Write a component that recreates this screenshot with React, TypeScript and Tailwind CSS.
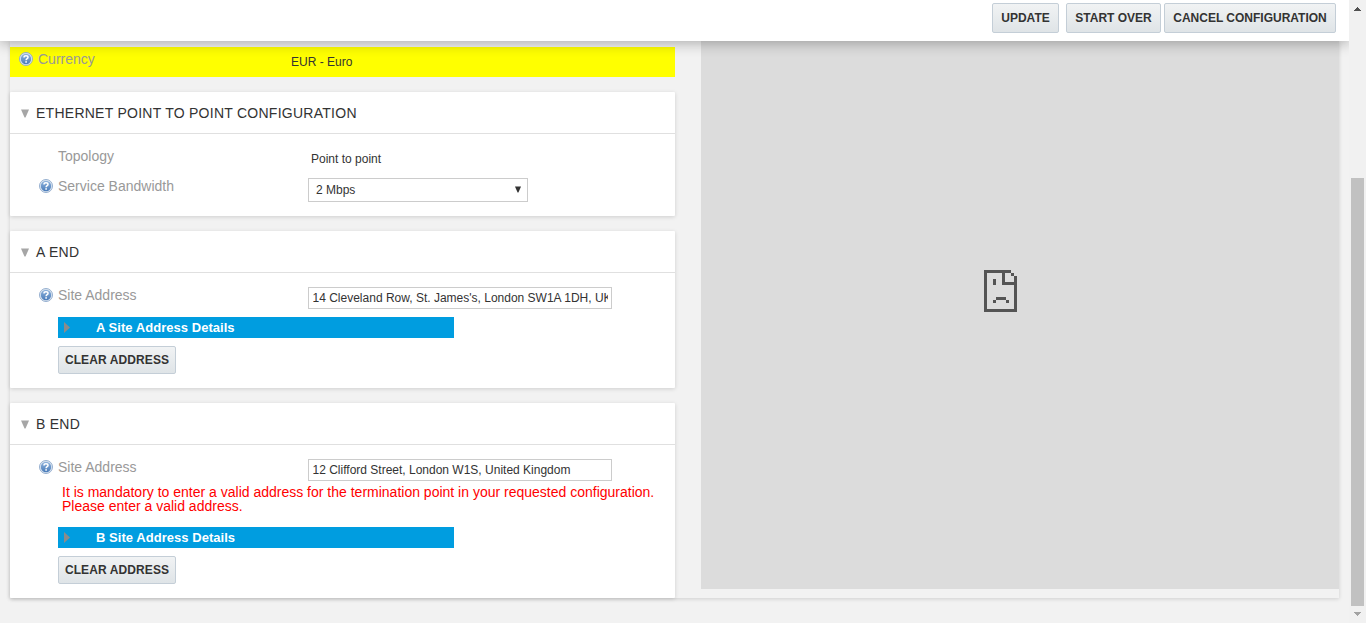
import type { ReactNode } from "react";

function HelpIcon() {
  return (
    <svg width="14" height="14" viewBox="0 0 14 14" className="block shrink-0">
      <defs>
        <linearGradient id="help" x1="0" y1="0" x2="0" y2="1">
          <stop offset="0" stopColor="#8fb3dc" />
          <stop offset="1" stopColor="#4a7cba" />
        </linearGradient>
      </defs>
      <circle cx="7" cy="7" r="6.5" fill="#dfe8f2" stroke="#8aa6ca" strokeWidth="0.9" />
      <circle cx="7" cy="7" r="5.2" fill="url(#help)" />
      <path d="M5 5.5C5 3.3 9 3.3 9 5.5C9 6.8 7.1 6.7 7.1 8.3" fill="none" stroke="#fff" strokeWidth="1.5" />
      <rect x="6.3" y="9.2" width="1.6" height="1.5" fill="#fff" />
    </svg>
  );
}

function Button({ children, className }: { children: ReactNode; className: string }) {
  return (
    <button
      className={`flex shrink-0 items-center justify-center whitespace-nowrap rounded-[2px] border border-[#c4ced7] bg-linear-to-b from-[#f1f3f4] to-[#dfe4e7] text-[12px] leading-[14px] font-bold text-[#333] ${className}`}
    >
      {children}
    </button>
  );
}

function Section({ title, className, children }: { title: string; className: string; children: ReactNode }) {
  return (
    <section className={`flex flex-col rounded-[1px] bg-white shadow-[0_1px_4px_rgba(0,0,0,0.15)] ${className}`}>
      <h2 className="flex h-[42px] shrink-0 items-center border-b border-[#e0e0e0] pt-[2px] pl-[11px] text-[14px] tracking-[0.26px] text-[#333]">
        <svg width="8" height="9" viewBox="0 0 8 9" className="mr-[7px]">
          <path d="M0 0.5H8L4.5 8.5H3.5Z" fill="#a6a6a6" />
        </svg>
        {title}
      </h2>
      {children}
    </section>
  );
}

function Label({ children, help = true }: { children: ReactNode; help?: boolean }) {
  return (
    <div className="flex h-4 w-[269px] shrink-0 items-center text-[14px] leading-4 text-[#999]">
      <span className="mr-[5px] w-[14px]">{help && <HelpIcon />}</span>
      {children}
    </div>
  );
}

function AddressRow({ value }: { value: string }) {
  return (
    <div className="mt-[14px] flex h-[22px] pl-[29px]">
      <Label>Site Address</Label>
      <input
        readOnly
        value={value}
        className="h-[22px] w-[304px] border border-[#ccc] bg-white pr-[3px] pl-[3.5px] text-[12px] text-[#333] outline-none"
      />
    </div>
  );
}

function Details({ children, className }: { children: ReactNode; className: string }) {
  return (
    <div className={`ml-12 flex h-[21px] w-[396px] shrink-0 items-center bg-[#009de0] text-[13px] font-bold tracking-[0.04px] text-white ${className}`}>
      <svg width="6" height="11" viewBox="0 0 6 11" className="mr-[26px] ml-[6px]">
        <path d="M0 0L6 5.5L0 11Z" fill="#8b8b8b" />
      </svg>
      {children}
    </div>
  );
}

function BrokenPage() {
  return (
    <svg width="33" height="42" viewBox="0 0 33 42" fill="#545454" shapeRendering="crispEdges">
      <path d="M0 0H27V3H30V6H33V42H0ZM3 3V39H30V15H18V3ZM21 3V12H30V6H27V3Z" fillRule="evenodd" />
      <path d="M9 9H12V15H9ZM12 27H22V30H12ZM9 30H12V33H9ZM22 30H25V33H22Z" />
    </svg>
  );
}

export default function App() {
  return (
    <div className="flex h-[623px] w-[1366px] overflow-hidden bg-[#f2f2f2] font-['Liberation_Sans',Arial,sans-serif]">
      <div className="flex w-[1349px] flex-col overflow-hidden">
        <header className="z-10 flex h-[41px] shrink-0 justify-end bg-white pt-[3px] pr-[13px] shadow-[0_2px_14px_rgba(0,0,0,0.3)]">
          <Button className="mr-[7px] h-[30px] w-[67px]">UPDATE</Button>
          <Button className="mr-[3px] h-[30px] w-[95px]">START OVER</Button>
          <Button className="h-[30px] w-[172px]">CANCEL CONFIGURATION</Button>
        </header>
        <main className="ml-[10px] flex h-[557px] w-[1329px] shrink-0 shadow-[0_1px_4px_rgba(0,0,0,0.15)]">
          <div className="flex w-[665px] shrink-0 flex-col">
            <div className="mt-[6px] flex h-[30px] shrink-0 bg-[#ffff00] pt-1 pl-[9px]">
              <Label>Currency</Label>
              <span className="ml-[3px] pt-[3px] text-[12px] leading-4 text-[#333]">EUR - Euro</span>
            </div>
            <Section title="ETHERNET POINT TO POINT CONFIGURATION" className="mt-[15px] h-[124px]">
              <div className="mt-[14px] flex h-[30px] pl-[29px]">
                <Label help={false}>Topology</Label>
                <span className="ml-[3px] pt-[3px] text-[12px] leading-4 text-[#333]">Point to point</span>
              </div>
              <div className="flex pl-[29px]">
                <Label>Service Bandwidth</Label>
                <div className="flex h-6 w-[220px] items-center justify-between border border-[#ccc] pr-[6px] pl-[7px] text-[12px] text-[#333]">
                  2 Mbps
                  <svg width="6" height="7" viewBox="0 0 6 7" className="mb-px">
                    <path d="M0 0.5H6L3.4 6.5H2.6Z" fill="#333" />
                  </svg>
                </div>
              </div>
            </Section>
            <Section title="A END" className="mt-[15px] h-[157px]">
              <AddressRow value="14 Cleveland Row, St. James's, London SW1A 1DH, UK" />
              <Details className="mt-2">A Site Address Details</Details>
              <Button className="mt-2 ml-12 h-7 w-[118px] tracking-[0.1px]">CLEAR ADDRESS</Button>
            </Section>
            <Section title="B END" className="mt-[15px] h-[195px]">
              <AddressRow value="12 Clifford Street, London W1S, United Kingdom" />
              <p className="mt-1 ml-[52px] h-[42px] text-[14px] leading-[14px] whitespace-nowrap text-[#f00]">
                It is mandatory to enter a valid address for the termination point in your requested configuration.
                <br />
                Please enter a valid address.
              </p>
              <Details className="">B Site Address Details</Details>
              <Button className="mt-2 ml-12 h-7 w-[118px] tracking-[0.1px]">CLEAR ADDRESS</Button>
            </Section>
          </div>
          <div className="ml-[26px] flex h-[548px] w-[638px] justify-center bg-[#dcdcdc] pt-[229px] pr-[39px]">
            <BrokenPage />
          </div>
        </main>
      </div>
      <aside className="flex w-[17px] flex-col items-center bg-[#f1f1f1]">
        <svg width="7" height="4" viewBox="0 0 7 4" className="mt-[7px]" shapeRendering="crispEdges">
          <path d="M3 0H4V1H5V2H6V3H7V4H0V3H1V2H2V1H3Z" fill="#505050" />
        </svg>
        <div className="mt-[167px] h-[428px] w-[13px] bg-[#c1c1c1]" />
        <svg width="7" height="4" viewBox="0 0 7 4" className="mt-[6px]" shapeRendering="crispEdges">
          <path d="M0 0H7V1H6V2H5V3H4V4H3V3H2V2H1V1H0Z" fill="#a3a3a3" />
        </svg>
      </aside>
    </div>
  );
}
